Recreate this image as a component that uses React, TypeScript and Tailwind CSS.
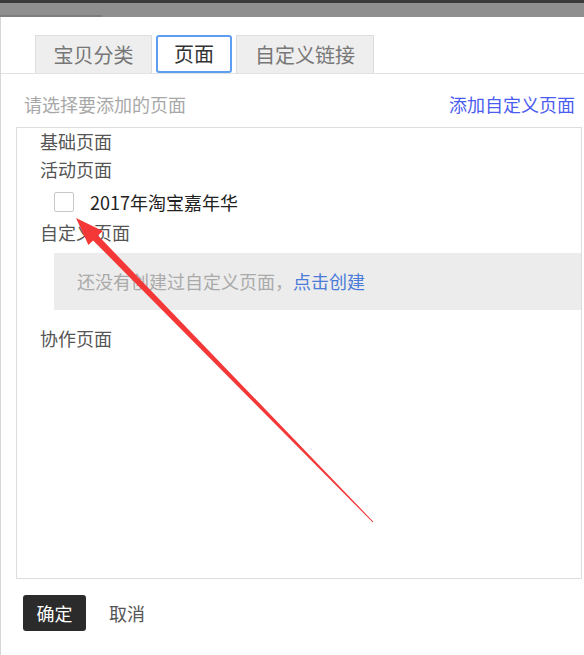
export default function App() {
  return (
    <div
      className="relative w-[584px] h-[655px] overflow-hidden bg-white text-[18px]"
      style={{ fontFamily: '"Noto Sans CJK SC", "Noto Sans", sans-serif' }}
    >
      {/* top window strip */}
      <div className="h-[3px] bg-[#3a3a3a]" />
      <div className="h-[14px] bg-[#8f8f8f] flex flex-col justify-end">
        <div className="w-[102px] h-[2px] bg-[#7e7e7e]" />
      </div>

      <div className="h-[638px] border-l border-[#d6d6d6]">
        {/* tabs */}
        <div className="flex items-end gap-[4px] pl-[34px] pt-[18px] border-b border-[#e2e2e2] text-[20px]">
          <div className="w-[117px] h-[38px] flex items-center justify-center bg-[#eeeeee] border border-b-0 border-[#dddddd] text-[#777]">
            宝贝分类
          </div>
          <div className="w-[76px] h-[38px] flex items-center justify-center bg-white border-2 border-[#5e9ef2] rounded-[3px] text-[#333]">
            页面
          </div>
          <div className="w-[138px] h-[38px] flex items-center justify-center bg-[#eeeeee] border border-b-0 border-[#dddddd] text-[#777]">
            自定义链接
          </div>
        </div>

        {/* heading */}
        <div className="flex items-center justify-between h-[24px] mt-[18px] pl-[23px] pr-[9px]">
          <span className="text-[#a8a8a8]">请选择要添加的页面</span>
          <span className="text-[#4b5cf0]">添加自定义页面</span>
        </div>

        {/* page list */}
        <div className="ml-[15px] mt-[11px] w-[566px] h-[452px] border border-[#dddddd]">
          <div className="h-[26px] flex items-center pl-[23px] text-[#555]">基础页面</div>
          <div className="h-[30px] flex items-center pl-[23px] text-[#555]">活动页面</div>
          <div className="h-[36px] flex items-center pl-[37px]">
            <span className="w-[20px] h-[20px] border border-[#c8c8c8] rounded-[2px] bg-white" />
            <span className="ml-[16px] text-[#222]">2017年淘宝嘉年华</span>
          </div>
          <div className="h-[24px] flex items-center pl-[23px] text-[#555]">自定义页面</div>
          <div className="ml-[37px] mt-[9px] h-[57px] flex items-center pl-[23px] bg-[#ececec] text-[#aaaaaa]">
            还没有创建过自定义页面，<span className="text-[#4a7bd8]">点击创建</span>
          </div>
          <div className="mt-[14px] h-[28px] flex items-center pl-[23px] text-[#555]">协作页面</div>
        </div>

        {/* actions */}
        <div className="flex items-center mt-[16px] pl-[22px]">
          <div className="w-[63px] h-[36px] flex items-center justify-center bg-[#2b2b2b] rounded-[3px] text-white">
            确定
          </div>
          <span className="ml-[23px] text-[#555]">取消</span>
        </div>
      </div>

      {/* annotation arrow */}
      <svg className="absolute left-0 top-0 pointer-events-none" width="584" height="655">
        <polygon
          fill="#f43838"
          points="76,218 102.8,231 98.1,235.6 373.4,521.7 372.6,522.3 93.1,240.4 88.4,245"
        />
      </svg>
    </div>
  );
}
